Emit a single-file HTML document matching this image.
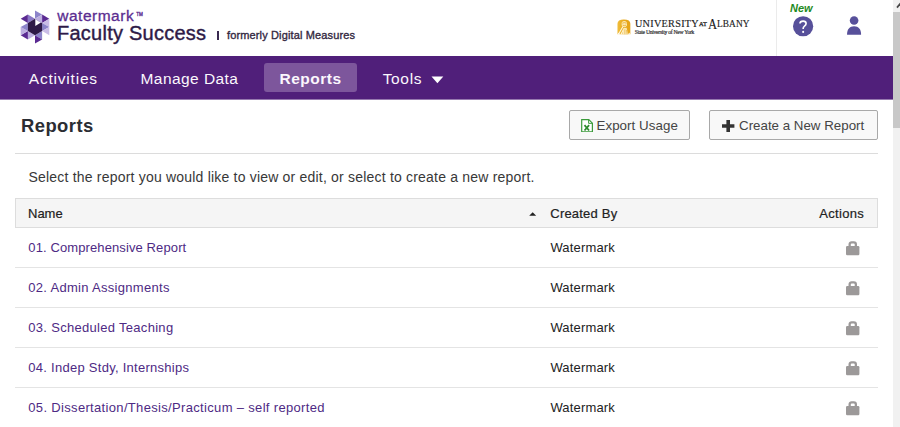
<!DOCTYPE html>
<html lang="en">
<head>
<meta charset="utf-8">
<title>Reports</title>
<style>
*{box-sizing:border-box;margin:0;padding:0}
html,body{width:900px;height:427px;overflow:hidden;background:#fff}
body{font-family:"Liberation Sans",Arial,sans-serif;color:#222;position:relative}
.abs{position:absolute;white-space:nowrap}
#hdr{left:0;top:0;width:893px;height:56px;background:#fff}
#nav{left:0;top:56px;width:893px;height:44px;background:#501f7a;border-bottom:1px solid #9679af}
.nv{color:#fbf7fd;font-size:15.5px;line-height:20px;top:68.5px;letter-spacing:.45px}
#navsel{left:264px;top:63px;width:93px;height:29px;background:#7d569c;border-radius:3px}
#sb{left:893px;top:0;width:7px;height:427px;background:#f1f1f1}
#sbt{left:893px;top:12px;width:7px;height:116px;background:#c8c8c8}
h1{font-size:18.4px;font-weight:bold;line-height:22px;left:21px;top:115.4px;color:#2b2d33;letter-spacing:.45px}
.btn{top:110px;height:30px;border:1px solid #a8a8a8;border-radius:2px;background:#f8f8f8}
.bt{font-size:13.33px;line-height:18px;color:#444;top:117px}
#hr{left:15px;top:153px;width:863px;height:1px;background:#dcdcdc}
.t{font-size:13px;line-height:18px;color:#222}
.lk{color:#4e2a84}
#th{left:15px;top:198px;width:863px;height:30px;background:#f5f5f5;border:1px solid #ddd}
.th{-webkit-text-stroke:.2px #222;top:204.5px}
.rb{left:15px;width:863px;height:1px;background:#e4e4e4}
.ser{font-family:"Liberation Serif",serif;color:#1c1c1c;-webkit-text-stroke:.15px #1c1c1c}
</style>
</head>
<body>
<div id="hdr" class="abs"></div>
<svg class="abs" style="left:17.65px;top:10.1px" width="34" height="34" viewBox="-17 -17 34 34" shape-rendering="geometricPrecision"><polygon points="-14.29,-8.25 -7.14,-12.38 -7.14,-4.12" fill="#5a2a92"/><polygon points="-7.14,-12.38 0.00,-8.25 -7.14,-4.12" fill="#8a78c6"/><polygon points="0.00,-16.50 7.14,-12.38 0.00,-8.25" fill="#8c84ca"/><polygon points="7.14,-12.38 0.00,-8.25 7.14,-4.12" fill="#bcaee0"/><polygon points="7.14,-12.38 14.29,-8.25 7.14,-4.12" fill="#5a2a92"/><polygon points="14.29,-8.25 14.29,0.00 7.14,-4.12" fill="#c9bce6"/><polygon points="14.29,0.00 7.14,-4.12 7.14,4.12" fill="#8c84ca"/><polygon points="14.29,8.25 14.29,0.00 7.14,4.12" fill="#c9bce6"/><polygon points="7.14,12.38 7.14,4.12 0.00,8.25" fill="#8c84ca"/><polygon points="0.00,8.25 0.00,16.50 7.14,12.38" fill="#5a2a92"/><polygon points="-7.14,12.38 0.00,8.25 -7.14,4.12" fill="#bcaee0"/><polygon points="-14.29,8.25 -7.14,4.12 -7.14,12.38" fill="#5a2a92"/><polygon points="-14.29,8.25 -14.29,0.00 -7.14,4.12" fill="#bcaee0"/><polygon points="-14.29,0.00 -7.14,4.12 -7.14,-4.12" fill="#8c84ca"/><polygon points="0.00,-8.25 7.14,-4.12 7.14,4.12 0.00,8.25 -7.14,4.12 -7.14,-4.12" fill="#2e1a47"/><polygon points="0.3,-7.9 0.3,-1.0 5.9,-4.5" fill="#fff"/><polygon points="0.3,-8.3 5.9,-5.0 7.1,-4.3 5.4,-4.5 0.3,-7.6" fill="#bcaee0"/></svg>
<div class="abs" id="wm" style="left:57.3px;top:5.7px;font-size:15.5px;line-height:18px;color:#5b2d90;letter-spacing:.5px;-webkit-text-stroke:.3px #5b2d90">watermark<span style="font-size:4.6px;vertical-align:4.6px;letter-spacing:0;margin-left:2px">TM</span></div>
<div class="abs" id="fs" style="left:57px;top:20.7px;font-size:20px;line-height:24px;color:#2e1a47;letter-spacing:.25px;-webkit-text-stroke:.4px #2e1a47">Faculty Success</div>
<div class="abs" style="left:217px;top:31px;width:1.6px;height:9px;background:#3a2a50"></div>
<div class="abs" id="fdm" style="left:227px;top:28.2px;font-size:11px;line-height:14px;color:#33283f;letter-spacing:.14px;-webkit-text-stroke:.35px #33283f">formerly Digital Measures</div>

<svg class="abs" style="left:616.6px;top:18.5px" width="14.2" height="16.2" viewBox="0 0 15 17" preserveAspectRatio="none"><defs><linearGradient id="gd" x1="0" x2="1" y1="0" y2="0"><stop offset="0" stop-color="#f0bd3c"/><stop offset=".5" stop-color="#e9aa1c"/><stop offset="1" stop-color="#e6a418"/></linearGradient></defs><path d="M.5 16V5Q.5.5 7.3.5Q14.1.5 14.1 5V16Z" fill="url(#gd)"/><ellipse cx="7.7" cy="5.3" rx="2.9" ry="3.3" fill="#fbe7b0"/><path d="M5.6 4.4q2.2-1.3 4.3 0M6 6.5q1.8 1 3.5 0" stroke="#e2a21c" stroke-width=".7" fill="none"/><path d="M1.6 16L6.3 7.8M4.3 16L7 10.8" stroke="#fff6dc" stroke-width="1.2" fill="none"/><path d="M6.7 9.5L10.2 9.3L11.6 16H5.6Z" fill="#fbe9b8"/><path d="M8.3 11V16M10 11.5L10.6 16" stroke="#e8ab26" stroke-width=".6" fill="none"/><path d="M.5 16.2L2 14.5L3 16.2ZM11.8 16.2L12.8 14.3L14.1 16.2Z" fill="#fff"/></svg>
<div class="abs ser" id="ua1" style="left:634.9px;top:17.06px;font-size:10.2px;line-height:13px;letter-spacing:.3px">UNIVERSITY</div>
<div class="abs ser" id="ua2" style="left:699px;top:18.6px;font-size:6.4px;line-height:9px;letter-spacing:.2px;-webkit-text-stroke:.25px #1c1c1c">AT</div>
<div class="abs ser" id="ua3" style="left:708.1px;top:14.94px;font-size:15.3px;line-height:17px;transform-origin:0 0;transform:scaleX(.82)">A</div>
<div class="abs ser" id="ua5" style="left:717.4px;top:16.96px;font-size:10.2px;line-height:13px;letter-spacing:.1px;transform-origin:0 0;transform:scaleX(.915)">LBANY</div>
<div class="abs ser" id="ua4" style="left:634.8px;top:28.8px;font-size:5.6px;line-height:7px;color:#333;-webkit-text-stroke:.2px #333;letter-spacing:-.25px">State University of New York</div>

<div class="abs" style="left:776px;top:0;width:1px;height:56px;background:#ebebeb"></div>
<div class="abs" id="new" style="left:790px;top:1.8px;font-size:11px;line-height:12px;font-weight:bold;font-style:italic;color:#1f8b1f">New</div>
<svg class="abs" style="left:792px;top:15px" width="22" height="22" viewBox="0 0 22 22"><circle cx="11.1" cy="11.25" r="10.1" fill="#57509a"/><path d="M8 8.5C8 6.9 9.4 6.1 11.1 6.1S14.1 7 14.1 8.6C14.1 10 13.2 10.6 12.3 11.3C11.5 11.9 11.2 12.3 11.2 13.2V13.9" fill="none" stroke="#fff" stroke-width="1.65"/><circle cx="11.15" cy="16.9" r="1.05" fill="#fff"/></svg>
<svg class="abs" style="left:846px;top:15px" width="16" height="21" viewBox="0 0 16 21"><circle cx="8.1" cy="5.55" r="4.3" fill="#57509a"/><path d="M1.05 19.65C1.05 14 3.6 11.15 8.08 11.15S15.1 14 15.1 19.65Z" fill="#57509a"/></svg>

<div id="nav" class="abs"></div>
<div id="navsel" class="abs"></div>
<div class="abs nv" id="n1" style="left:28.8px;letter-spacing:.79px">Activities</div>
<div class="abs nv" id="n2" style="left:140.5px;letter-spacing:.44px">Manage Data</div>
<div class="abs nv" id="n3" style="left:279.5px;font-weight:bold;letter-spacing:.5px">Reports</div>
<div class="abs nv" id="n4" style="left:382.7px;letter-spacing:.65px">Tools</div>
<svg class="abs" style="left:431px;top:75.5px" width="13" height="8" viewBox="0 0 13 8"><path d="M.5.5h11.8L6.4 7.2Z" fill="#fff"/></svg>

<div id="sb" class="abs"></div><div id="sbt" class="abs"></div>
<svg class="abs" style="left:893px;top:0" width="7" height="12" viewBox="0 0 7 12"><path d="M4 7.6L7.6 3.2" fill="none" stroke="#484848" stroke-width="1.8"/></svg>

<h1 class="abs" id="h1">Reports</h1>

<div class="abs btn" style="left:569px;width:121px"></div>
<svg class="abs" style="left:580.9px;top:118.8px" width="12.1" height="13.6" viewBox="0 0 12.1 14" preserveAspectRatio="none"><path d="M.7.7H7.8L11.4 4.3V13.3H.7Z" fill="#fff" stroke="#3a9a3a" stroke-width="1.2"/><path d="M7.6 .7V4.5H11.4" fill="none" stroke="#3a9a3a" stroke-width="1"/><path d="M3.5 6.3L8.1 11.8M8.1 6.3L3.5 11.8" stroke="#2c8a2c" stroke-width="1.7"/></svg>
<div class="abs bt" id="b1" style="left:596.5px;letter-spacing:.05px">Export Usage</div>

<div class="abs btn" style="left:709px;width:169px"></div>
<svg class="abs" style="left:721.5px;top:120px" width="13" height="13" viewBox="0 0 13 13"><path d="M4.4 0H8v4.3h4.4v3.5H8v4.3H4.4V7.8H0V4.3h4.4Z" fill="#333"/></svg>
<div class="abs bt" id="b2" style="left:739px">Create a New Report</div>

<div id="hr" class="abs"></div>
<div class="abs" id="sel" style="left:28.5px;top:167.6px;font-size:14px;line-height:18px;color:#383838;letter-spacing:.2px">Select the report you would like to view or edit, or select to create a new report.</div>
<div id="th" class="abs"></div>
<div class="abs t th" id="hn" style="left:28px">Name</div>
<svg class="abs" style="left:528.8px;top:211.6px" width="8" height="4" viewBox="0 0 8 4"><path d="M.2 3.8L3.7.2L7.2 3.8Z" fill="#222"/></svg>
<div class="abs t th" id="hc" style="left:550.3px;letter-spacing:.2px">Created By</div>
<div class="abs t th" id="ha" style="left:819.3px;letter-spacing:.3px">Actions</div>
<div class="abs t lk" id="r0" style="left:28.3px;top:239.3px;letter-spacing:0.11px">01. Comprehensive Report</div>
<div class="abs t wm" style="left:550.4px;top:239.3px;letter-spacing:.17px">Watermark</div>
<svg class="abs" style="left:846px;top:240.8px" width="14" height="15" viewBox="0 0 14 15"><path d="M3.65 6V3.3a2 2 0 0 1 2-2h2.2a2 2 0 0 1 2 2V6" fill="none" stroke="#9c9999" stroke-width="2.3"/><rect x="0" y="5" width="13.4" height="9.2" rx="1.2" fill="#9c9999"/></svg>
<div class="abs rb" style="top:267px"></div>
<div class="abs t lk" id="r1" style="left:28.3px;top:279.3px;letter-spacing:0.3px">02. Admin Assignments</div>
<div class="abs t wm" style="left:550.4px;top:279.3px;letter-spacing:.17px">Watermark</div>
<svg class="abs" style="left:846px;top:280.8px" width="14" height="15" viewBox="0 0 14 15"><path d="M3.65 6V3.3a2 2 0 0 1 2-2h2.2a2 2 0 0 1 2 2V6" fill="none" stroke="#9c9999" stroke-width="2.3"/><rect x="0" y="5" width="13.4" height="9.2" rx="1.2" fill="#9c9999"/></svg>
<div class="abs rb" style="top:307px"></div>
<div class="abs t lk" id="r2" style="left:28.3px;top:319.3px;letter-spacing:0.3px">03. Scheduled Teaching</div>
<div class="abs t wm" style="left:550.4px;top:319.3px;letter-spacing:.17px">Watermark</div>
<svg class="abs" style="left:846px;top:320.8px" width="14" height="15" viewBox="0 0 14 15"><path d="M3.65 6V3.3a2 2 0 0 1 2-2h2.2a2 2 0 0 1 2 2V6" fill="none" stroke="#9c9999" stroke-width="2.3"/><rect x="0" y="5" width="13.4" height="9.2" rx="1.2" fill="#9c9999"/></svg>
<div class="abs rb" style="top:347px"></div>
<div class="abs t lk" id="r3" style="left:28.3px;top:359.3px;letter-spacing:0.27px">04. Indep Stdy, Internships</div>
<div class="abs t wm" style="left:550.4px;top:359.3px;letter-spacing:.17px">Watermark</div>
<svg class="abs" style="left:846px;top:360.8px" width="14" height="15" viewBox="0 0 14 15"><path d="M3.65 6V3.3a2 2 0 0 1 2-2h2.2a2 2 0 0 1 2 2V6" fill="none" stroke="#9c9999" stroke-width="2.3"/><rect x="0" y="5" width="13.4" height="9.2" rx="1.2" fill="#9c9999"/></svg>
<div class="abs rb" style="top:387px"></div>
<div class="abs t lk" id="r4" style="left:28.3px;top:399.3px;letter-spacing:0.33px">05. Dissertation/Thesis/Practicum – self reported</div>
<div class="abs t wm" style="left:550.4px;top:399.3px;letter-spacing:.17px">Watermark</div>
<svg class="abs" style="left:846px;top:400.8px" width="14" height="15" viewBox="0 0 14 15"><path d="M3.65 6V3.3a2 2 0 0 1 2-2h2.2a2 2 0 0 1 2 2V6" fill="none" stroke="#9c9999" stroke-width="2.3"/><rect x="0" y="5" width="13.4" height="9.2" rx="1.2" fill="#9c9999"/></svg>

</body>
</html>
